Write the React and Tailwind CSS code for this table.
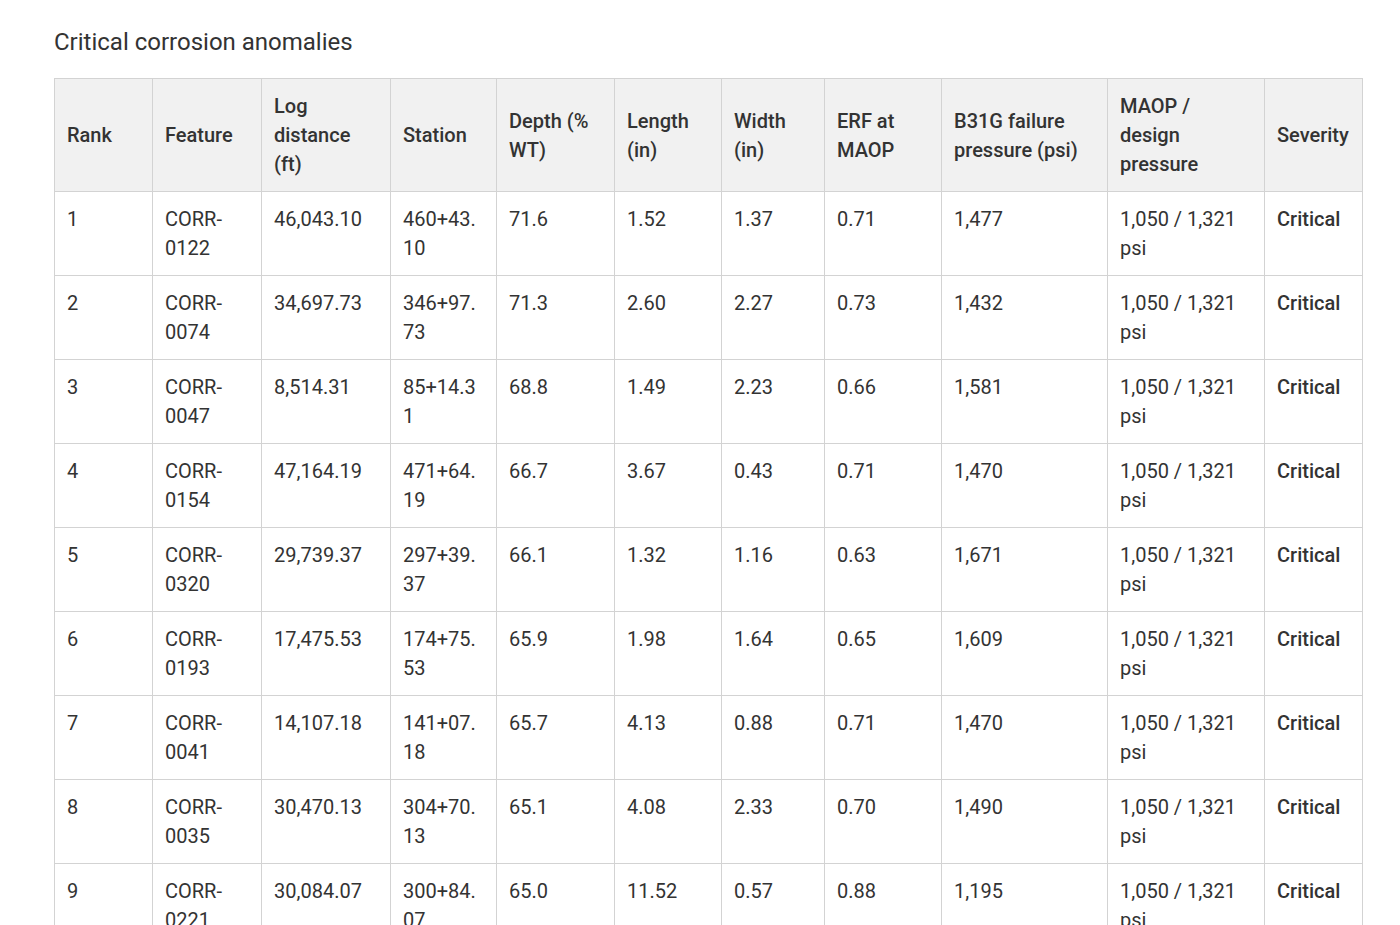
import React from 'react';

const columns = [
  { label: 'Rank', width: 98 },
  { label: 'Feature', width: 109 },
  { label: 'Log distance (ft)', width: 129 },
  { label: 'Station', width: 106 },
  { label: 'Depth (% WT)', width: 118 },
  { label: 'Length (in)', width: 107 },
  { label: 'Width (in)', width: 103 },
  { label: 'ERF at MAOP', width: 117 },
  { label: 'B31G failure pressure (psi)', width: 166 },
  { label: 'MAOP / design pressure', width: 157 },
  { label: 'Severity', width: 98 },
];

const anomalies = [
  ['1', 'CORR-0122', '46,043.10', '460+43.10', '71.6', '1.52', '1.37', '0.71', '1,477'],
  ['2', 'CORR-0074', '34,697.73', '346+97.73', '71.3', '2.60', '2.27', '0.73', '1,432'],
  ['3', 'CORR-0047', '8,514.31', '85+14.31', '68.8', '1.49', '2.23', '0.66', '1,581'],
  ['4', 'CORR-0154', '47,164.19', '471+64.19', '66.7', '3.67', '0.43', '0.71', '1,470'],
  ['5', 'CORR-0320', '29,739.37', '297+39.37', '66.1', '1.32', '1.16', '0.63', '1,671'],
  ['6', 'CORR-0193', '17,475.53', '174+75.53', '65.9', '1.98', '1.64', '0.65', '1,609'],
  ['7', 'CORR-0041', '14,107.18', '141+07.18', '65.7', '4.13', '0.88', '0.71', '1,470'],
  ['8', 'CORR-0035', '30,470.13', '304+70.13', '65.1', '4.08', '2.33', '0.70', '1,490'],
  ['9', 'CORR-0221', '30,084.07', '300+84.07', '65.0', '11.52', '0.57', '0.88', '1,195'],
];

export default function App() {
  return (
    <div className="min-h-screen bg-white px-[54px] pt-[26px] text-[#333] font-['Roboto','Liberation_Sans',sans-serif]">
      <h2 className="mb-5 text-[24px] leading-8 font-normal">Critical corrosion anomalies</h2>
      <table className="w-[1308px] table-fixed border-collapse text-[20px] leading-[29px]">
        <colgroup>
          {columns.map((col) => (
            <col key={col.label} style={{ width: col.width }} />
          ))}
        </colgroup>
        <thead>
          <tr className="bg-[#f1f1f1]">
            {columns.map((col) => (
              <th
                key={col.label}
                className="border border-[#d3d3d3] px-3 pt-[13px] pb-3 text-left align-middle font-medium break-words"
              >
                {col.label}
              </th>
            ))}
          </tr>
        </thead>
        <tbody>
          {anomalies.map((row) => (
            <tr key={row[0]}>
              {row.map((cell, i) => (
                <td
                  key={i}
                  className="border border-[#d3d3d3] px-3 pt-[13px] pb-3 align-top break-words"
                >
                  {cell}
                </td>
              ))}
              <td className="border border-[#d3d3d3] px-3 pt-[13px] pb-3 align-top break-words">
                1,050 / 1,321 psi
              </td>
              <td className="border border-[#d3d3d3] px-3 pt-[13px] pb-3 align-top font-medium">
                Critical
              </td>
            </tr>
          ))}
        </tbody>
      </table>
    </div>
  );
}
